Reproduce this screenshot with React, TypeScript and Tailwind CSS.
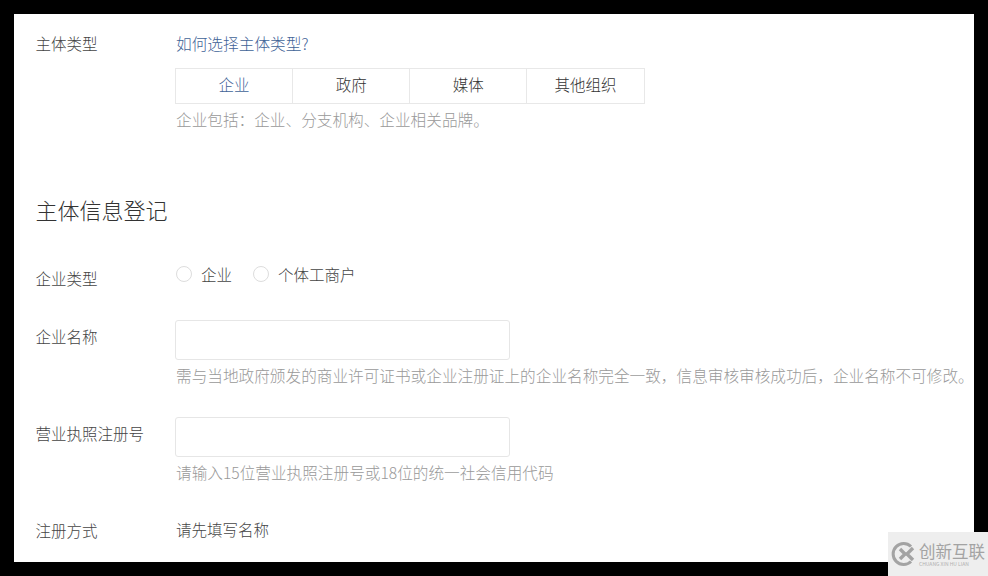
const font = { fontFamily: '"Noto Sans CJK SC", sans-serif' };

function Row({ label, className, children }: { label: string; className: string; children: React.ReactNode }) {
  return (
    <div className={"flex " + className}>
      <div className="w-[140.5px] shrink-0 text-[15.5px] font-light leading-[24px] text-[#444]">{label}</div>
      <div className="min-w-0 flex-1">{children}</div>
    </div>
  );
}

function Radio({ label }: { label: string }) {
  return (
    <div className="flex items-center gap-[9px]">
      <span className="h-4 w-4 rounded-full border border-[#ddd] bg-white"></span>
      <span className="text-[15.5px] font-light leading-[24px] text-[#444]">{label}</span>
    </div>
  );
}

const tabs = ["企业", "政府", "媒体", "其他组织"];

export default function App() {
  return (
    <div className="relative h-[576px] w-[988px] overflow-hidden bg-black p-[14px]" style={font}>
      <div className="h-[548px] w-[960px] overflow-hidden bg-white pl-[21.5px] pt-[17px]">
        <Row label="主体类型" className="">
          <a className="mt-[1px] block text-[15.7px] font-light leading-[24px] text-[#3f6397]">如何选择主体类型?</a>
          <div className="-ml-[1px] mt-[12px] flex h-[36px] w-[469.5px] border border-[#e8e8e8]">
            {tabs.map((t, i) => (
              <div
                key={t}
                className={
                  "flex flex-1 items-center justify-center pb-[2px] text-[15.5px] font-light " +
                  (i > 0 ? "border-l border-[#e8e8e8] " : "") +
                  (i === 0 ? "text-[#3f6397]" : "text-[#333]")
                }
              >
                {t}
              </div>
            ))}
          </div>
          <div className="mt-[4px] text-[15.65px] font-light leading-[24px] text-[#999]">企业包括：企业、分支机构、企业相关品牌。</div>
        </Row>

        <h2 className="mt-[61px] text-[22px] font-light leading-[32px] text-[#333]">主体信息登记</h2>

        <Row label="企业类型" className="mt-[41px]">
          <div className="-mt-[4px] flex gap-[21px]">
            <Radio label="企业" />
            <Radio label="个体工商户" />
          </div>
        </Row>

        <Row label="企业名称" className="mt-[34px]">
          <div className="-ml-[1px] -mt-[4px] h-[40px] w-[334.5px] rounded-[3px] border border-[#e6e6e6] bg-white"></div>
          <div className="mt-[4px] whitespace-nowrap text-[15.65px] font-light leading-[24px] text-[#999]">
            需与当地政府颁发的商业许可证书或企业注册证上的企业名称完全一致，信息审核审核成功后，企业名称不可修改。
          </div>
        </Row>

        <Row label="营业执照注册号" className="mt-[33px]">
          <div className="-ml-[1px] -mt-[4px] h-[40px] w-[334.5px] rounded-[3px] border border-[#e6e6e6] bg-white"></div>
          <div className="mt-[4px] text-[15.65px] font-light leading-[24px] text-[#999]">请输入15位营业执照注册号或18位的统一社会信用代码</div>
        </Row>

        <Row label="注册方式" className="mt-[33px]">
          <div className="-mt-[1px] text-[15.5px] font-light leading-[24px] text-[#444]">请先填写名称</div>
        </Row>
      </div>

      <div className="absolute bottom-0 right-0 flex h-[44px] w-[100px] items-center gap-[2px] bg-[#eeeeee] pl-[3px]">
        <svg viewBox="0 0 26 26" className="h-[26px] w-[26px] shrink-0" fill="none">
          <path d="M20 5.5A10.5 10.5 0 1 0 20 20.5" stroke="#a3a3a3" strokeWidth="3" />
          <path d="M9 8l5 5-5 5M22 7l-6 6 6 6M14 13h3" stroke="#a3a3a3" strokeWidth="3.4" />
        </svg>
        <div className="flex flex-col gap-[2px]">
          <span className="whitespace-nowrap text-[16.5px] leading-[16px] text-[#a3a3a3]">创新互联</span>
          <span className="whitespace-nowrap text-[5px] leading-[5px] text-[#b0b0b0]">CHUANG XIN HU LIAN</span>
        </div>
      </div>
    </div>
  );
}
